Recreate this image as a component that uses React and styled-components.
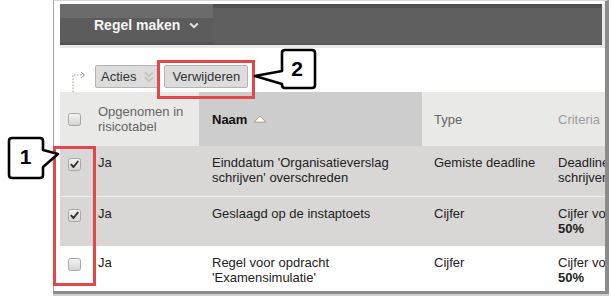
import React from 'react';
import styled, { createGlobalStyle, css } from 'styled-components';

const Global = createGlobalStyle`
  html, body { margin: 0; padding: 0; background: #fff; }
  body { font-family: "Liberation Sans", Arial, sans-serif; }
`;

const Screen = styled.div`
  position: relative;
  width: 611px;
  height: 296px;
  overflow: hidden;
  padding-left: 53px;
  box-sizing: border-box;
  background: #fff;
`;

const Frame = styled.div`
  width: 556px;
  height: 294px;
  box-sizing: border-box;
  border-left: 1px solid #a2a2a2;
  border-top: 1px solid #d8d8d8;
  border-right: 4px solid #8b8b8b;
  border-bottom: 3px solid #8b8b8b;
  box-shadow: 0 2px 0 #cfcfcf;
  padding: 3px 0 0 6px;
  overflow: hidden;
  display: flex;
  flex-direction: column;
`;

const HeaderWrap = styled.div`
  background: #e8e8e8;
  padding: 0 3px 3px 0;
  flex: none;
`;

const Bar = styled.div`
  height: 41px;
  display: flex;
  background: linear-gradient(#515151 0 4px, #5f5f5f 4px calc(100% - 2px), #575757 calc(100% - 2px));
`;

const MenuButton = styled.div`
  width: 153px;
  display: flex;
  align-items: center;
  gap: 9px;
  padding-left: 34px;
  box-sizing: border-box;
  background: linear-gradient(#6b6b6b 0 14px, #5c5c5c 14px calc(100% - 3px), #535353 calc(100% - 3px));
  color: #f6f6f6;
  font-weight: bold;
  font-size: 14px;
  padding-top: 1px;
`;

const Toolbar = styled.div`
  height: 44px;
  flex: none;
  box-sizing: border-box;
  display: flex;
  align-items: flex-start;
  gap: 4px;
  padding: 17px 0 0 10px;
`;

const SelectArrow = styled.svg`
  align-self: flex-end;
  width: 21px;
  height: 22px;
  display: block;
`;

const Button = styled.div`
  height: 23px;
  box-sizing: border-box;
  display: inline-flex;
  align-items: center;
  gap: 7px;
  border: 1px solid #b4b4b4;
  border-radius: 2px;
  background: #dcdcdc;
  color: #333;
  font-size: 13px;
  padding: ${p => (p.$menu ? '0 4px 0 5px' : '0 7px')};
`;

const gridCols = css`
  display: grid;
  grid-template-columns: 28px 111px 223px 124px 240px;
  width: 726px;
`;

const HeaderRow = styled.div`
  ${gridCols};
  height: 54px;
  flex: none;
  background: #e9e9e8;
`;

const HeadCell = styled.div`
  display: flex;
  align-items: center;
  justify-content: ${p => (p.$center ? 'center' : 'flex-start')};
  padding-left: ${p => p.$pad || 0}px;
  font-size: 13px;
  line-height: 15px;
  color: ${p => p.$color || '#666'};
  font-weight: ${p => (p.$bold ? 'bold' : 'normal')};
  background: ${p => p.$bg || 'transparent'};
  gap: 6px;
`;

const Row = styled.div`
  ${gridCols};
  height: ${p => p.$h}px;
  flex: none;
  box-sizing: border-box;
  background: ${p => (p.$shaded ? '#d8d7d5' : '#fff')};
  border-bottom: ${p => (p.$divider ? '1px solid #ececec' : 'none')};
`;

const Cell = styled.div`
  padding: 9px 0 0 ${p => p.$pad || 0}px;
  font-size: 13px;
  line-height: 15px;
  color: #222;
  display: ${p => (p.$center ? 'flex' : 'block')};
  justify-content: center;
  align-items: flex-start;
`;

const Line = styled.div`
  white-space: nowrap;
  font-weight: ${p => (p.$bold ? 'bold' : 'normal')};
`;

const Box = styled.span`
  width: 13px;
  height: 13px;
  box-sizing: border-box;
  border: 1px solid #a8a8a8;
  border-radius: 2.5px;
  background: linear-gradient(#f3f3f3, #d4d4d4);
  display: block;
  margin-top: ${p => p.$offset || 0}px;
  position: relative;
`;

const Tick = styled.svg`
  position: absolute;
  left: 0;
  top: 0;
  width: 11px;
  height: 11px;
`;

const Highlight = styled.div`
  position: absolute;
  left: ${p => p.$x}px;
  top: ${p => p.$y}px;
  width: ${p => p.$w}px;
  height: ${p => p.$h}px;
  box-sizing: border-box;
  border: 3px solid #e4474a;
  pointer-events: none;
`;

const Callout = styled.div`
  position: absolute;
  left: ${p => p.$x}px;
  top: ${p => p.$y}px;
  width: ${p => p.$w}px;
  height: ${p => p.$h}px;
`;

const CalloutShape = styled.svg`
  position: absolute;
  inset: 0;
  width: 100%;
  height: 100%;
  overflow: visible;
`;

const CalloutNumber = styled.span`
  position: absolute;
  left: ${p => p.$x}px;
  top: ${p => p.$y}px;
  width: ${p => p.$w}px;
  height: ${p => p.$h}px;
  display: flex;
  align-items: center;
  justify-content: center;
  font-family: "Liberation Sans", Arial, sans-serif;
  font-weight: bold;
  font-size: 21px;
  color: #000;
`;

function Checkbox({ checked, offset }) {
  return (
    <Box $offset={offset}>
      {checked && (
        <Tick viewBox="0 0 11 11">
          <path d="M2.3 5.6 L4.5 8 L8.8 2.6" fill="none" stroke="#333" strokeWidth="1.9" strokeLinecap="round" strokeLinejoin="round" />
        </Tick>
      )}
    </Box>
  );
}

const rows = [
  {
    checked: true,
    shaded: true,
    divider: true,
    h: 51,
    name: "Einddatum 'Organisatieverslag schrijven' overschreden",
    type: 'Gemiste deadline',
    criteria: [["Deadline 'Organisatieverslag"], ["schrijven' overschreden"]],
  },
  {
    checked: true,
    shaded: true,
    h: 49,
    name: 'Geslaagd op de instaptoets',
    type: 'Cijfer',
    criteria: [["Cijfer voor 'Geslaagd op de instaptoets'"], ['50%', true]],
  },
  {
    checked: false,
    shaded: false,
    h: 49,
    name: "Regel voor opdracht 'Examensimulatie'",
    type: 'Cijfer',
    criteria: [["Cijfer voor 'Examensimulatie'"], ['50%', true]],
  },
];

export default function App() {
  return (
    <>
      <Global />
      <Screen>
        <Frame>
          <HeaderWrap>
            <Bar>
              <MenuButton>
                Regel maken
                <svg width="10" height="7" viewBox="0 0 10 7">
                  <path d="M1.2 1.5 L5 5.2 L8.8 1.5" fill="none" stroke="#e6e6e6" strokeWidth="2" />
                </svg>
              </MenuButton>
            </Bar>
          </HeaderWrap>

          <Toolbar>
            <SelectArrow viewBox="0 0 21 22">
              <path d="M3 22 V5 H14" fill="none" stroke="#9a9a9a" strokeWidth="1" strokeDasharray="1.5 1.5" />
              <path d="M11 2 L14.5 5 L11 8" fill="none" stroke="#9a9a9a" strokeWidth="1" />
            </SelectArrow>
            <Button $menu>
              Acties
              <svg width="12" height="12" viewBox="0 0 12 12">
                <path d="M2 1.5 L6 5 L10 1.5 M2 6.5 L6 10 L10 6.5" fill="none" stroke="#c4c4c4" strokeWidth="2" />
              </svg>
            </Button>
            <Button>Verwijderen</Button>
          </Toolbar>

          <HeaderRow>
            <HeadCell $center>
              <Checkbox />
            </HeadCell>
            <HeadCell $pad={10}>
              Opgenomen in
              <br />
              risicotabel
            </HeadCell>
            <HeadCell $pad={13} $bold $color="#111" $bg="#cdcdcd">
              Naam
              <svg width="14" height="8" viewBox="0 0 14 8">
                <polygon points="1,7.2 7,1 13,7.2" fill="#fdfaee" stroke="#a39e8c" strokeWidth="1" />
              </svg>
            </HeadCell>
            <HeadCell $pad={12}>Type</HeadCell>
            <HeadCell $pad={12} $color="#9c9c9c">Criteria</HeadCell>
          </HeaderRow>

          {rows.map((r, i) => (
            <Row key={i} $h={r.h} $shaded={r.shaded} $divider={r.divider}>
              <Cell $center>
                <Checkbox checked={r.checked} offset={3} />
              </Cell>
              <Cell $pad={10}>Ja</Cell>
              <Cell $pad={13}>{r.name}</Cell>
              <Cell $pad={12}>{r.type}</Cell>
              <Cell $pad={12}>
                {r.criteria.map(([t, b], j) => (
                  <Line key={j} $bold={b}>{t}</Line>
                ))}
              </Cell>
            </Row>
          ))}
        </Frame>

        <Highlight $x={157} $y={60} $w={98} $h={39} />
        <Highlight $x={53} $y={146} $w={43} $h={140} />

        <Callout $x={252} $y={48} $w={66} $h={42}>
          <CalloutShape viewBox="0 0 66 42">
            <path
              d="M33 2 H60 Q63 2 63 5 V37 Q63 40 60 40 H33 Q30 40 30 37 V36 L3 28 L30 23 V5 Q30 2 33 2 Z"
              fill="#fff"
              stroke="#000"
              strokeWidth="2.6"
              strokeLinejoin="round"
            />
          </CalloutShape>
          <CalloutNumber $x={30} $y={2} $w={30} $h={38}>2</CalloutNumber>
        </Callout>

        <Callout $x={6} $y={135} $w={56} $h={46}>
          <CalloutShape viewBox="0 0 56 46">
            <path
              d="M6 3 H34 Q37 3 37 6 V15 L52 19 L37 32 V40 Q37 43 34 43 H6 Q3 43 3 40 V6 Q3 3 6 3 Z"
              fill="#fff"
              stroke="#000"
              strokeWidth="2.6"
              strokeLinejoin="round"
            />
          </CalloutShape>
          <CalloutNumber $x={3} $y={3} $w={33} $h={38}>1</CalloutNumber>
        </Callout>
      </Screen>
    </>
  );
}
